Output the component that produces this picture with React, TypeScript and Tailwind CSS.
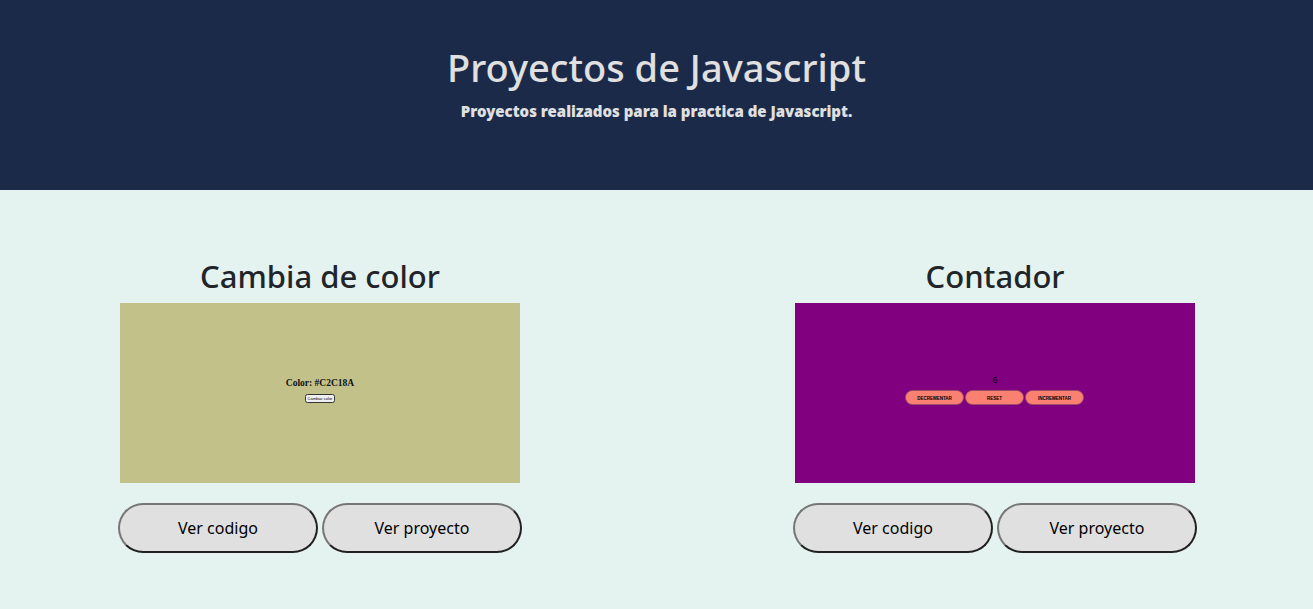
import type { ReactNode } from "react";

function ColorPreview() {
  return (
    <svg viewBox="0 0 400 180" role="img" aria-label="Cambia de color" className="block w-[400px] max-w-full bg-[#c2c18a]">
      <text x="200" y="83" textAnchor="middle" fontSize="9.5" fontWeight="700" fontFamily="'Liberation Serif', serif" fill="#111">
        Color: #C2C18A
      </text>
      <rect x="185.5" y="91.5" width="29" height="8" rx="2" fill="#efefef" stroke="#333" />
      <text x="200" y="97" textAnchor="middle" fontSize="4" fontFamily="'Liberation Sans', sans-serif" fill="#000">
        Cambiar color
      </text>
    </svg>
  );
}

const counterActions = [
  { label: "DECREMENTAR", x: 110 },
  { label: "RESET", x: 170 },
  { label: "INCREMENTAR", x: 230 },
];

function CounterPreview() {
  return (
    <svg viewBox="0 0 400 180" role="img" aria-label="Contador" className="block w-[400px] max-w-full bg-[#800080]">
      <text x="200" y="80" textAnchor="middle" fontSize="9" fontFamily="'Liberation Sans', sans-serif" fill="#000">
        6
      </text>
      {counterActions.map(({ label, x }) => (
        <g key={label}>
          <rect x={x + 0.5} y="87.5" width="58" height="14" rx="7" fill="#fa8072" stroke="#8f5560" strokeWidth="0.7" />
          <text x={x + 29.5} y="96.5" textAnchor="middle" fontSize="4.5" fontWeight="700" fontFamily="'Liberation Sans', sans-serif" fill="#000">
            {label}
          </text>
        </g>
      ))}
    </svg>
  );
}

function ActionButton({ children }: { children: ReactNode }) {
  return (
    <button
      type="button"
      className="h-[50px] w-[200px] rounded-[25px] border-2 border-t-[#767676] border-r-[#212121] border-b-[#212121] border-l-[#767676] bg-[#e0e0e0] text-base text-black"
    >
      {children}
    </button>
  );
}

function ProjectCard({ title, preview }: { title: string; preview: ReactNode }) {
  return (
    <article className="flex flex-col items-center">
      <h2 className="mb-2 text-[31px] leading-[38px] font-medium">{title}</h2>
      {preview}
      <div className="mt-5 flex flex-wrap justify-center gap-1">
        <ActionButton>Ver codigo</ActionButton>
        <ActionButton>Ver proyecto</ActionButton>
      </div>
    </article>
  );
}

export default function App() {
  return (
    <div className="min-h-screen bg-[#e4f3ef] font-['Segoe_UI','Noto_Sans',sans-serif] text-[#212529]">
      <header className="bg-[#1b2a49] px-4 pt-[43px] pb-[67px] text-center text-[#e0e0e0]">
        <h1 className="mb-2 text-[38px] leading-[48px] font-medium">Proyectos de Javascript</h1>
        <p className="text-[15px] leading-[24px] font-black">Proyectos realizados para la practica de Javascript.</p>
      </header>
      <main className="flex flex-wrap justify-between gap-y-16 pt-[67px] pr-[116px] pb-14 pl-[118px]">
        <ProjectCard title="Cambia de color" preview={<ColorPreview />} />
        <ProjectCard title="Contador" preview={<CounterPreview />} />
      </main>
    </div>
  );
}
